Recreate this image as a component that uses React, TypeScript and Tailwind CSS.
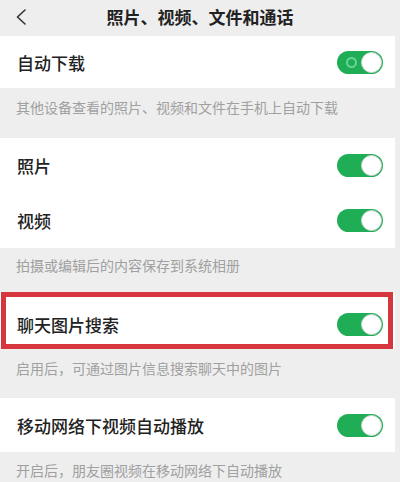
import React from "react";

const font = { fontFamily: '"Noto Sans CJK SC", "Noto Sans", sans-serif' };

function Toggle({ ring = false }: { ring?: boolean }) {
  return (
    <div className="relative w-[46px] h-[23px] rounded-full bg-[#1fae55] shrink-0">
      {ring && (
        <div className="absolute left-[9px] top-[6px] w-[11px] h-[11px] rounded-full border-2 border-[#6ad497]" />
      )}
      <div className="absolute right-[1px] top-[1px] w-[21px] h-[21px] rounded-full bg-white border border-[#cfd6d1]" />
    </div>
  );
}

function Row({ label, ring = false, className = "" }: { label: string; ring?: boolean; className?: string }) {
  return (
    <div className={`flex items-center justify-between bg-white mr-[5px] pl-[17px] pr-[12px] ${className}`}>
      <span className="text-[17px] font-medium text-[#222] leading-none">{label}</span>
      <Toggle ring={ring} />
    </div>
  );
}

function Caption({ text, className = "" }: { text: string; className?: string }) {
  return (
    <div className={`pl-[16px] text-[14px] leading-[16px] text-[#a0a0a0] ${className}`}>{text}</div>
  );
}

export default function App() {
  return (
    <div className="w-[400px] h-[482px] bg-[#eeeeee] overflow-hidden" style={font}>
      <div className="grid grid-cols-[40px_1fr_40px] items-center h-[33px]">
        <div className="pl-[15px] pt-[1px]">
          <svg width="12" height="16" viewBox="0 0 12 16" fill="none">
            <path d="M10 1 L2.5 8 L10 15" stroke="#333" strokeWidth="1.6" strokeLinecap="round" strokeLinejoin="round" />
          </svg>
        </div>
        <div className="text-center text-[17px] font-bold text-[#222] leading-none">照片、视频、文件和通话</div>
        <div />
      </div>
      <div className="h-[3px]" />
      <Row label="自动下载" ring className="h-[52px]" />
      <Caption text="其他设备查看的照片、视频和文件在手机上自动下载" className="h-[50px] pt-[11px]" />
      <Row label="照片" className="h-[55px]" />
      <Row label="视频" className="h-[55px]" />
      <Caption text="拍摄或编辑后的内容保存到系统相册" className="h-[44px] pt-[9px]" />
      <div className="relative">
        <Row label="聊天图片搜索" className="h-[57px] pt-[8px]" />
        <div className="absolute left-[1px] right-[7px] top-0 bottom-0 border-[5px] border-[#d8363e] pointer-events-none" />
      </div>
      <Caption text="启用后，可通过图片信息搜索聊天中的图片" className="h-[49px] pt-[11px]" />
      <Row label="移动网络下视频自动播放" className="h-[54px]" />
      <Caption text="开启后，朋友圈视频在移动网络下自动播放" className="pt-[10px]" />
    </div>
  );
}
